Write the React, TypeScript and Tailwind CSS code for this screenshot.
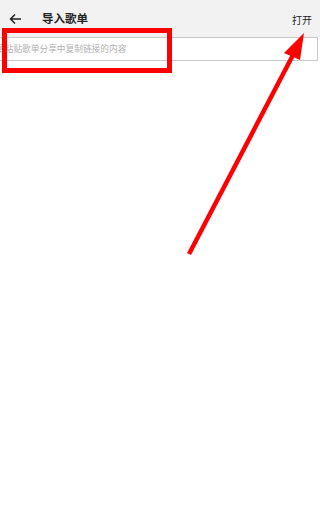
import React from "react";

const font = { fontFamily: '"Noto Sans CJK SC", "Noto Sans", sans-serif' };

export default function App() {
  return (
    <div className="relative w-[320px] h-[530px] bg-white overflow-hidden" style={font}>
      {/* header */}
      <div className="flex items-center h-[37px] bg-[#f2f2f2] pl-[9px] pr-[8px]">
        <svg width="13" height="12" viewBox="0 0 13 12" className="mt-[1px]">
          <path d="M12 6H1.5M6 1.5L1.5 6L6 10.5" stroke="#222" strokeWidth="1.5" fill="none" />
        </svg>
        <span className="ml-[20px] text-[11.5px] font-bold text-[#222] leading-none">导入歌单</span>
        <span className="ml-auto text-[10px] text-[#222] leading-none mt-[2px]">打开</span>
      </div>

      {/* input, text scrolled so the first glyph is partly hidden */}
      <div className="flex items-center h-[24px] mr-[2px] border-y border-r border-[#c8c8c8] bg-white overflow-hidden">
        <span className="ml-[-4px] whitespace-nowrap text-[8.7px] text-[#b0b0b0] leading-none">
          请粘贴歌单分享中复制链接的内容
        </span>
      </div>

      {/* annotations */}
      <svg className="absolute inset-0 pointer-events-none" width="320" height="530">
        <rect x="4.5" y="30.5" width="165" height="40" fill="none" stroke="#ff0000" strokeWidth="5" />
        <line x1="189" y1="254" x2="293" y2="55" stroke="#ff0000" strokeWidth="4.5" />
        <polygon points="304,33 284,53 300,60" fill="#ff0000" />
      </svg>
    </div>
  );
}
